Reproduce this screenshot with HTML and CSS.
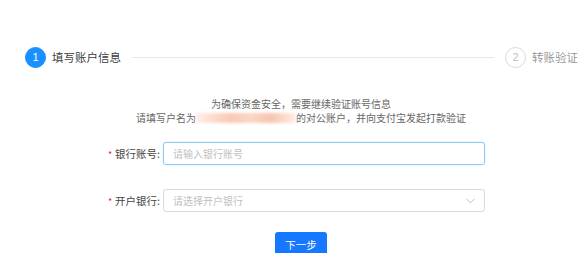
FILE: index.html
```html
<!DOCTYPE html>
<html lang="zh-CN">
<head>
    <meta charset="UTF-8">
    <title>转账验证</title>
    <link rel="stylesheet" href="styles.css">
</head>
<body>
    <div class="page">
        <div class="steps">
            <div class="step active">
                <span class="step-num">1</span>
                <span class="step-title">填写账户信息</span>
            </div>
            <div class="step-line"></div>
            <div class="step">
                <span class="step-num">2</span>
                <span class="step-title">转账验证</span>
            </div>
        </div>

        <div class="tips">
            <p>为确保资金安全，需要继续验证账号信息</p>
            <p>请填写户名为<span class="masked"></span>的对公账户，并向支付宝发起打款验证</p>
        </div>

        <form class="form">
            <div class="form-row">
                <label class="form-label"><i>*</i>银行账号:</label>
                <input class="form-input focused" type="text" placeholder="请输入银行账号">
            </div>
            <div class="form-row">
                <label class="form-label"><i>*</i>开户银行:</label>
                <div class="form-select">
                    <span>请选择开户银行</span>
                    <svg width="9" height="6" viewBox="0 0 9 6"><path d="M0.5 0.8 L4.5 4.8 L8.5 0.8" fill="none" stroke="#c0c0c0" stroke-width="1"/></svg>
                </div>
            </div>
            <div class="actions">
                <button type="button" class="btn-next">下一步</button>
            </div>
        </form>
    </div>
</body>
</html>
```

FILE: styles.css
```css
body {
    margin: 0;
    background: #fff;
    font-family: "Noto Sans CJK SC", "Liberation Sans", sans-serif;
    color: #333;
}
.page {
    width: 584px;
    height: 253px;
    overflow: hidden;
}
.steps {
    display: flex;
    align-items: center;
    padding: 47px 6px 0 25px;
    height: 20px;
}
.step {
    display: flex;
    align-items: center;
    color: rgba(0, 0, 0, 0.45);
}
.step-num {
    width: 21px;
    height: 21px;
    box-sizing: border-box;
    border: 1px solid #d9d9d9;
    border-radius: 50%;
    display: flex;
    align-items: center;
    justify-content: center;
    font-family: "Liberation Sans", sans-serif;
    font-size: 11px;
    color: rgba(0, 0, 0, 0.3);
}
.step-title {
    margin-left: 6px;
    font-size: 11.5px;
    white-space: nowrap;
}
.step.active {
    color: rgba(0, 0, 0, 0.8);
}
.step.active .step-num {
    background: #1890ff;
    border-color: #1890ff;
    color: #fff;
}
.step-line {
    flex: 1;
    height: 1px;
    background: #e8e8e8;
    margin: 0 11px 0 11px;
}
.tips {
    margin-top: 30px;
    padding-left: 18px;
    text-align: center;
    font-size: 10px;
    line-height: 14px;
    color: #666;
}
.tips p {
    margin: 0;
}
.masked {
    display: inline-block;
    width: 100px;
    height: 10px;
    vertical-align: -1px;
    background: linear-gradient(90deg, #fef1ec 0%, #fde0d4 12%, #f9c9b4 35%, #fbd6c6 55%, #f8c4ae 75%, #fcdccf 90%, #fef0ea 100%);
    filter: blur(1.5px);
}
.form {
    margin: 17px 0 0 103px;
}
.form-row {
    display: flex;
    align-items: center;
    margin-bottom: 24px;
}
.form-label {
    width: 57px;
    padding-right: 3px;
    text-align: right;
    font-size: 10.5px;
    color: #444;
}
.form-label i {
    font-style: normal;
    color: #f5222d;
    margin-right: 3px;
    font-size: 9px;
}
.form-input,
.form-select {
    width: 322px;
    height: 23px;
    box-sizing: border-box;
    border: 1px solid #d9d9d9;
    border-radius: 3px;
    padding: 0 9px;
    font-family: "Noto Sans CJK SC", sans-serif;
    font-size: 10px;
    outline: none;
}
.form-input::placeholder {
    color: #bfbfbf;
}
.form-input.focused {
    border-color: #8fcdf5;
    box-shadow: 0 0 0 1px rgba(24, 144, 255, 0.08);
}
.form-select {
    display: flex;
    align-items: center;
    justify-content: space-between;
    color: #bfbfbf;
}
.actions {
    display: flex;
    padding-left: 172px;
    margin-top: -4px;
}
.btn-next {
    width: 52px;
    height: 26px;
    padding: 0;
    border: none;
    border-radius: 3px;
    background: #1677ff;
    color: #fff;
    font-family: "Noto Sans CJK SC", sans-serif;
    font-size: 10.5px;
    line-height: 20px;
    cursor: pointer;
}
```
